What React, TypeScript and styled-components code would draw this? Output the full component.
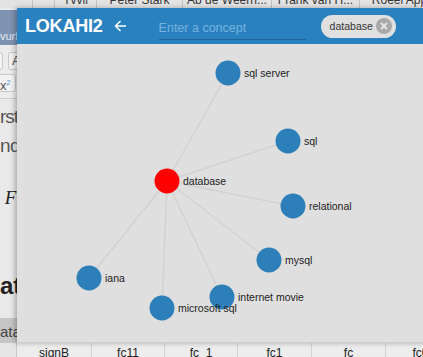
import React from "react";
import styled, { createGlobalStyle } from "styled-components";

const Global = createGlobalStyle`
  html, body { margin: 0; padding: 0; background: #e6e6e6; overflow: hidden; }
  body { font-family: "Liberation Sans", Arial, Helvetica, sans-serif; }
  * { box-sizing: border-box; }
`;

const Page = styled.div`
  position: relative;
  width: 423px;
  height: 357px;
  overflow: hidden;
  display: grid;
  grid-template-rows: 8px 335px 14px;
  background: #e8e8e8;
`;

/* ---------- background page ---------- */
const TopStrip = styled.div`
  display: flex;
  height: 8px;
  overflow: hidden;
  background: #e3e3e3;
`;

const TopCell = styled.div<{ $w: number }>`
  flex: 0 0 ${(p) => p.$w}px;
  height: 8px;
  border-right: 1px solid #c2c2c2;
  overflow: hidden;
  text-align: center;
  font-size: 12px;
  line-height: 12px;
  color: #333;
  white-space: nowrap;
`;

const CutText = styled.span`
  display: block;
  margin-top: -6px;
`;

const Middle = styled.div`
  display: flex;
  height: 335px;
`;

const SideStrip = styled.div`
  width: 17px;
  height: 335px;
  overflow: hidden;
  display: flex;
  flex-direction: column;
  background: #e9e9e9;
`;

const SideHeader = styled.div`
  margin-top: 2px;
  height: 35px;
  background: #7e92b2;
  display: flex;
  flex-direction: column;
  justify-content: flex-end;
  padding-bottom: 3px;
  color: #e6eaf1;
  font-size: 11px;
  line-height: 12px;
  white-space: nowrap;
`;

const SideToolbar = styled.div`
  height: 54px;
  background: #ececec;
  border-bottom: 1px solid #cfcfcf;
  display: flex;
  flex-direction: column;
  gap: 4px;
  padding-top: 7px;
`;

const ToolRow = styled.div`
  display: flex;
  gap: 5px;
  height: 18px;
`;

const ToolButton = styled.div<{ $w: number; $shift?: number }>`
  flex: 0 0 ${(p) => p.$w}px;
  height: 18px;
  margin-left: ${(p) => p.$shift ?? 0}px;
  border: 1px solid #c9c9c9;
  border-radius: 3px;
  background: #f3f3f3;
  color: #555;
  font-size: 13px;
  line-height: 16px;
  padding-left: 3px;
  white-space: nowrap;
  sup { color: #4a8fd0; font-size: 7px; }
`;

const SideText = styled.div<{ $size: number; $top: number; $weight?: number; $serif?: boolean; $color?: string; $track?: number }>`
  margin-top: ${(p) => p.$top}px;
  font-size: ${(p) => p.$size}px;
  line-height: ${(p) => p.$size}px;
  font-weight: ${(p) => p.$weight ?? 400};
  font-family: ${(p) => (p.$serif ? '"Liberation Serif", "Times New Roman", serif' : '"Liberation Sans", Arial, sans-serif')};
  font-style: ${(p) => (p.$serif ? "italic" : "normal")};
  letter-spacing: ${(p) => p.$track ?? 0}px;
  color: ${(p) => p.$color ?? "#555"};
  white-space: nowrap;
`;

const SideBar = styled.div`
  margin-top: auto;
  height: 25px;
  background: #c6c6c6;
  display: flex;
  align-items: flex-end;
  padding-bottom: 3px;
  font-size: 15px;
  line-height: 16px;
  color: #444;
  white-space: nowrap;
`;

const BottomRow = styled.div`
  display: flex;
  height: 14px;
  overflow: hidden;
  background: #ededed;
`;

const BottomLead = styled.div`
  flex: 0 0 17px;
  border-right: 1px solid #c8c8c8;
  background: #e6e6e6;
`;

const BottomCell = styled.div<{ $w: number }>`
  flex: 0 0 ${(p) => p.$w}px;
  border-right: 1px solid #d2d2d2;
  text-align: center;
  font-size: 12px;
  line-height: 12px;
  padding-top: 4px;
  color: #222;
  white-space: nowrap;
`;

/* ---------- popup ---------- */
const Popup = styled.div`
  position: absolute;
  left: 17px;
  top: 8px;
  width: 420px;
  height: 335px;
  display: flex;
  flex-direction: column;
  background: #dfdfdf;
  box-shadow: -2px 0 5px rgba(0, 0, 0, 0.28);
  border-bottom: 1px solid #cdcdcd;
`;

const Header = styled.header`
  height: 36px;
  flex: 0 0 36px;
  background: #2a81bf;
  display: flex;
  align-items: center;
  padding-left: 8px;
`;

const Title = styled.h1`
  margin: 0;
  font-size: 18px;
  font-weight: 700;
  color: #fff;
  letter-spacing: -0.2px;
  line-height: 20px;
`;

const BackButton = styled.button`
  margin-left: 11px;
  width: 14px;
  height: 14px;
  padding: 0;
  border: 0;
  background: transparent;
  display: flex;
  align-items: center;
  justify-content: center;
  cursor: pointer;
`;

const ConceptInput = styled.input`
  margin-left: 31px;
  width: 147px;
  height: 22px;
  margin-top: 5px;
  border: 0;
  border-bottom: 1.5px solid #1c659c;
  background: transparent;
  padding: 0;
  font-family: "Liberation Sans", Arial, sans-serif;
  font-size: 12.5px;
  color: #fff;
  outline: none;
  &::placeholder { color: #76b3df; }
`;

const Chip = styled.div`
  margin-left: 15px;
  height: 23px;
  border-radius: 12px;
  background: #e0e0e0;
  display: flex;
  align-items: center;
  padding-left: 9px;
  padding-right: 4px;
  gap: 3px;
  font-size: 10.5px;
  color: #333;
`;

const ChipClose = styled.span`
  width: 16px;
  height: 16px;
  border-radius: 50%;
  background: #a9a9a9;
  display: flex;
  align-items: center;
  justify-content: center;
`;

const Canvas = styled.svg`
  display: block;
  flex: 1;
  width: 100%;
`;

const Label = styled.text`
  font-family: "Liberation Sans", Arial, sans-serif;
  font-size: 10.5px;
  fill: #222;
`;

type GNode = { id: string; x: number; y: number; root?: boolean };

const nodes: GNode[] = [
  { id: "database", x: 167, y: 181, root: true },
  { id: "sql server", x: 228, y: 73 },
  { id: "sql", x: 288, y: 141 },
  { id: "relational", x: 293, y: 206 },
  { id: "mysql", x: 269, y: 260 },
  { id: "iana", x: 89, y: 278 },
  { id: "internet movie", x: 222, y: 297 },
  { id: "microsoft sql", x: 162, y: 308 },
];

const root = nodes[0];

export default function App() {
  const topCells: [number, string][] = [
    [33, ""],
    [22, ""],
    [42, "Tvvil"],
    [86, "Peter Stark"],
    [89, "Ab de Weern..."],
    [88, "Frank van H..."],
    [90, "Roeel App..."],
  ];
  const bottomCells: [number, string][] = [
    [75, "signB"],
    [73, "fc11"],
    [73, "fc_1"],
    [74, "fc1"],
    [74, "fc"],
    [70, "fc0"],
  ];
  return (
    <>
      <Global />
      <Page>
        <TopStrip>
          {topCells.map(([w, t], i) => (
            <TopCell key={i} $w={w}>
              <CutText>{t}</CutText>
            </TopCell>
          ))}
        </TopStrip>
        <Middle>
          <SideStrip>
            <SideHeader>vurf</SideHeader>
            <SideToolbar>
              <ToolRow>
                <ToolButton $w={14} $shift={-11} />
                <ToolButton $w={20} $shift={0}>A</ToolButton>
              </ToolRow>
              <ToolRow>
                <ToolButton $w={20} $shift={-4}>
                  x<sup>2</sup>
                </ToolButton>
              </ToolRow>
            </SideToolbar>
            <SideText $size={19} $top={8} $track={-1}>rst</SideText>
            <SideText $size={19} $top={10} $track={-0.5}>nd</SideText>
            <SideText $size={19} $top={33} $serif $color="#222">&nbsp;F</SideText>
            <SideText $size={24} $top={67} $weight={700} $color="#222">at</SideText>
            <SideBar>ata</SideBar>
          </SideStrip>
        </Middle>
        <BottomRow>
          <BottomLead />
          {bottomCells.map(([w, t], i) => (
            <BottomCell key={i} $w={w}>
              {t}
            </BottomCell>
          ))}
        </BottomRow>

        <Popup>
          <Header>
            <Title>LOKAHI2</Title>
            <BackButton aria-label="back">
              <svg width="13" height="12" viewBox="0 0 13 12">
                <path d="M12 6H1.5M6.5 1L1.5 6L6.5 11" fill="none" stroke="#fff" strokeWidth="1.5" />
              </svg>
            </BackButton>
            <ConceptInput placeholder="Enter a concept" />
            <Chip>
              database
              <ChipClose>
                <svg width="8" height="8" viewBox="0 0 8 8">
                  <path d="M1 1L7 7M7 1L1 7" stroke="#e8e8e8" strokeWidth="1.8" />
                </svg>
              </ChipClose>
            </Chip>
          </Header>
          <Canvas viewBox="17 44 420 298" preserveAspectRatio="xMinYMin meet">
            {nodes.slice(1).map((n) => (
              <line key={n.id} x1={root.x} y1={root.y} x2={n.x} y2={n.y} stroke="#d2d2d2" strokeWidth={1.5} />
            ))}
            {nodes.map((n) => (
              <circle key={n.id} cx={n.x} cy={n.y} r={12.5} fill={n.root ? "#ff0000" : "#2c7fb8"} />
            ))}
            {nodes.map((n) => (
              <Label key={n.id} x={n.x + 16} y={n.y + 4}>
                {n.id}
              </Label>
            ))}
          </Canvas>
        </Popup>
      </Page>
    </>
  );
}
